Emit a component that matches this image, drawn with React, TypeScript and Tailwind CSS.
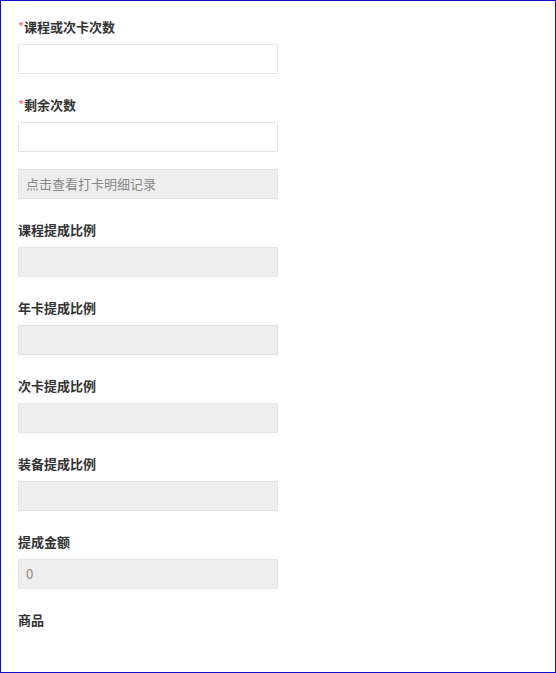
import React from "react";

type Field = {
  label?: string;
  required?: boolean;
  disabled?: boolean;
  value?: string;
  placeholder?: string;
};

const fields: Field[] = [
  { label: "课程或次卡次数", required: true },
  { label: "剩余次数", required: true },
  { placeholder: "点击查看打卡明细记录", disabled: true },
  { label: "课程提成比例", disabled: true },
  { label: "年卡提成比例", disabled: true },
  { label: "次卡提成比例", disabled: true },
  { label: "装备提成比例", disabled: true },
  { label: "提成金额", disabled: true, value: "0" },
];

function Input({ f }: { f: Field }) {
  return (
    <div
      className={
        "w-[260px] h-[30px] border border-[#e3e3e3] flex items-center px-[7px] text-[13px] " +
        (f.disabled ? "bg-[#eeeeee] text-[#888]" : "bg-white text-[#333]")
      }
    >
      {f.value ?? f.placeholder ?? ""}
    </div>
  );
}

export default function App() {
  return (
    <div
      className="w-[556px] h-[673px] border border-[#1010cc] bg-white pl-[17px] pt-[16px]"
      style={{ fontFamily: '"Noto Sans CJK SC", "Noto Sans", sans-serif' }}
    >
      {fields.map((f, i) =>
        f.label ? (
          <div key={i} className="mb-[21px]">
            <div className="h-[20px] leading-[20px] text-[13px] font-bold text-[#333] mb-[7px]">
              {f.required && <span className="text-[#f56c6c] font-normal">*</span>}
              {f.label}
            </div>
            <Input f={f} />
          </div>
        ) : (
          <div key={i} className="-mt-[4px] mb-[21px]">
            <Input f={f} />
          </div>
        )
      )}
      <div className="h-[20px] leading-[20px] text-[13px] font-bold text-[#333]">商品</div>
    </div>
  );
}
